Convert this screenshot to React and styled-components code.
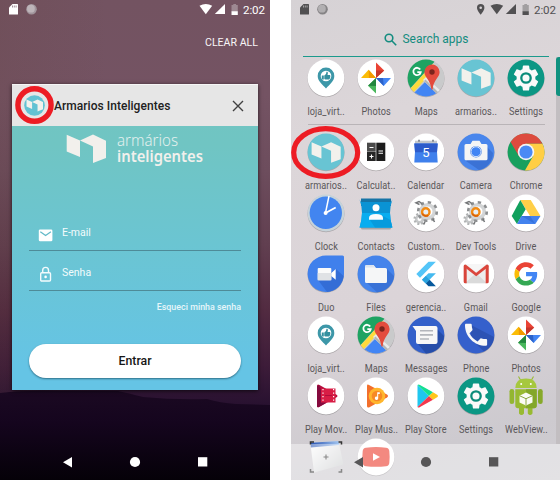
import React from "react";
import styled, { createGlobalStyle } from "styled-components";

const Global = createGlobalStyle`
  * { box-sizing: border-box; }
  body { margin: 0; background: #fff; font-family: Roboto, "Liberation Sans", sans-serif; }
`;

const Page = styled.div`
  display: flex;
  gap: 21px;
  width: 560px;
  height: 480px;
  overflow: hidden;
  background: #fff;
`;

const Phone = styled.section`
  position: relative;
  display: flex;
  flex-direction: column;
  flex: none;
  width: ${(p) => p.$width}px;
  height: 480px;
  overflow: hidden;
  background: ${(p) => p.$background};
`;

const Hills = styled.svg`
  position: absolute;
  left: 0;
  bottom: 0;
`;

/* ---------- status bar ---------- */

const StatusRow = styled.header`
  position: relative;
  display: flex;
  align-items: center;
  flex: none;
  height: 20px;
  padding-left: 9px;
  color: ${(p) => p.$color};
`;

const StatusIcons = styled.svg`
  flex: none;
  width: 232px;
  height: 20px;
`;

const Time = styled.span`
  margin-left: 2px;
  font-size: 11.6px;
  line-height: 18px;
  margin-bottom: 1px;
  letter-spacing: -0.1px;
`;

function StatusBar({ color, pin, dim }) {
  return (
    <StatusRow $color={color}>
      <StatusIcons viewBox="9 0 232 20" fill={color}>
        <path d="M12.500 4H17.500Q18 4 18 4.500V14Q18 14.500 17.500 14.500H9.500Q9 14.500 9 14V7.500Z" />
        <path d="M12.500 5.500v2M14.300 5.500v2M16.100 5.500v2" stroke={pin ? "#bbb" : "#8a7380"} strokeWidth=".8" />
        <circle cx="31.500" cy="9.200" r="5.300" fill={pin ? "#858385" : "#a1959c"} />
        <circle cx="30.900" cy="8.700" r="3.900" fill={pin ? "#b1afb1" : "#bdb4b9"} />
        {pin && (
          <path
            fillRule="evenodd"
            d="M189.700 4a3.700 3.700 0 0 0-3.700 3.700c0 2.900 3.700 7 3.700 7s3.700-4.100 3.700-7A3.700 3.700 0 0 0 189.700 4zm0 2.400a1.300 1.300 0 1 1 0 2.600 1.300 1.300 0 0 1 0-2.600z"
          />
        )}
        <path d="M199.500 5.800Q205.800 2 212.200 5.800L205.800 14.300Z" />
        <path d="M225 4V14H214.800Z" />
        <path d="M233.300 4h2.800v1h1.700v6.200h-6.300V5h1.800z" fill={dim} />
        <path d="M231.500 11.200h6.300V15h-6.300z" />
      </StatusIcons>
      <Time>2:02</Time>
    </StatusRow>
  );
}

/* ---------- navigation bar ---------- */

const NavBar = styled.nav`
  position: absolute;
  left: 0;
  right: 0;
  bottom: 0;
  height: 36px;
  padding-left: 63px;
  background: ${(p) => p.$background};
`;

function Navigation({ color, background }) {
  return (
    <NavBar $background={background}>
      <svg width="145" height="36" fill={color}>
        <path d="M9 13v10.400L0 18.200z" />
        <circle cx="72" cy="18" r="5.100" />
        <path d="M135 13.200h9.300v9.300H135z" />
      </svg>
    </NavBar>
  );
}

const Highlight = styled.svg`
  position: absolute;
  left: ${(p) => p.$left}px;
  top: ${(p) => p.$top}px;
  fill: none;
  stroke: #ed1c24;
`;

/* ---------- recents screen ---------- */

const ClearAll = styled.div`
  padding: 15px 12px 0 0;
  height: 64px;
  text-align: right;
  font-size: 10.6px;
  line-height: 15px;
  color: #f8f5f7;
`;

const Card = styled.article`
  position: relative;
  display: flex;
  flex-direction: column;
  width: 246px;
  height: 306px;
  margin-left: 12px;
  background: linear-gradient(#71c5c1, #70c5c3 20%, #6bc5d2 52%, #65c4e5 92%);
  box-shadow: 0 1px 4px rgba(0, 0, 0, 0.7);
`;

const CardHeader = styled.div`
  display: flex;
  align-items: center;
  flex: none;
  height: 42px;
  padding-left: 12px;
  background: #e6e6e6;
  border-top: 1px solid #f6f6f6;
`;

const CardTitle = styled.h1`
  margin: 0 0 0 9px;
  width: 178px;
  font-size: 12px;
  font-weight: 500;
  line-height: 20px;
  letter-spacing: 0.04px;
  color: #212121;
  white-space: nowrap;
`;

const Logo = styled.svg`
  flex: none;
  margin-left: 54px;
`;

const Field = styled.label`
  display: flex;
  align-items: center;
  height: ${(p) => p.$height}px;
  margin: ${(p) => p.$top}px 17px 0;
  padding: ${(p) => p.$drop}px 0 0 9px;
  border-bottom: 1px solid #4e8b98;
  font-size: 10.5px;
  color: #f3fbfc;
`;

const FieldText = styled.span`
  margin: 0 0 3px 9px;
  line-height: 14px;
`;

const Forgot = styled.div`
  margin: 9px 17px 0 0;
  text-align: right;
  font-size: 8.9px;
  line-height: 14px;
  font-weight: 500;
  color: #e6f6fa;
`;

const EnterButton = styled.button`
  width: 212px;
  height: 34px;
  margin: 30px 17px 0;
  padding: 0;
  border: 0;
  border-radius: 17px;
  background: #fff;
  box-shadow: 0 1px 2px rgba(0, 40, 60, 0.55);
  font: 500 12.3px Roboto, sans-serif;
  color: #161616;
`;

const BRAND = "M0 .500L13.300 6.200V22.800L0 17.200ZM13.300 6.200L26.300 .200L39.300 6.500V23.800L26.300 28.800V12.200Z";

function Recents() {
  return (
    <Phone
      $width={270}
      $background="linear-gradient(90deg, rgba(95,60,50,.14), rgba(75,20,40,0) 40%), linear-gradient(#735361 0, #745363 95px, #6d4d5d 170px, #613f50 245px, #522b41 310px, #3d1c39 365px, #281130 405px)"
    >
      <Hills width="270" height="100" viewBox="0 380 270 100">
        <defs>
          <linearGradient id="night" x1="0" y1="0" x2="0" y2="1">
            <stop offset="0" stopColor="#1b0922" />
            <stop offset=".35" stopColor="#15051e" />
            <stop offset="1" stopColor="#050108" />
          </linearGradient>
        </defs>
        <path d="M0 393Q25 390 60 391H118Q128 393 143 397Q175 400 207 399Q220 403 236 404L270 405V480H0Z" fill="url(#night)" />
      </Hills>
      <StatusBar color="#fff" dim="#9d8892" />
      <ClearAll>CLEAR ALL</ClearAll>
      <Card>
        <CardHeader>
          <svg width="21" height="21" viewBox="0 0 21 21">
            <circle cx="10.500" cy="10.500" r="10.300" fill="#63c2d3" />
            <path d={BRAND} fill="#f3f1ec" transform="translate(2.500 4.300) scale(.42)" />
          </svg>
          <CardTitle>Armarios Inteligentes</CardTitle>
          <svg width="12" height="12" stroke="#404040" strokeWidth="1.400">
            <path d="M1 1L11 11M11 1L1 11" />
          </svg>
        </CardHeader>
        <Logo width="140" height="40" fill="#f2f0ec" fontFamily="Noto Sans, Open Sans, sans-serif">
          <path d={BRAND} transform="translate(.700 8.300)" />
          <text x="51" y="19.500" fontSize="15.500" fontWeight="300" textLength="61" lengthAdjust="spacingAndGlyphs" fill="#e2f0ee">armários</text>
          <text x="51" y="35.500" fontSize="15.500" fontWeight="600" textLength="86" lengthAdjust="spacingAndGlyphs">inteligentes</text>
        </Logo>
        <Field $height={35} $top={50} $drop={3}>
          <svg width="15" height="14" viewBox="0 0 15 14">
            <rect x=".800" y="1.500" width="13.600" height="11.800" rx="1.300" fill="#fff" />
            <path d="M2.300 3.700L7.600 7.500L12.900 3.700" fill="none" stroke="#62b9c8" strokeWidth="1.200" />
          </svg>
          <FieldText>E-mail</FieldText>
        </Field>
        <Field $height={40} $top={0} $drop={7}>
          <svg width="15" height="17" viewBox="0 0 15 17" fill="none" stroke="#f3fbfd" strokeWidth="1.400">
            <rect x="2.700" y="6.700" width="9.800" height="8.300" rx="1" />
            <path d="M4.700 6.500V4.300a2.900 2.900 0 0 1 5.800 0V6.500" />
            <circle cx="7.600" cy="10.900" r="1.300" fill="#fff" stroke="none" />
          </svg>
          <FieldText>Senha</FieldText>
        </Field>
        <Forgot>Esqueci minha senha</Forgot>
        <EnterButton>Entrar</EnterButton>
      </Card>
      <Navigation color="#fff" background="transparent" />
      <Highlight $left={14} $top={85} width="41" height="40" strokeWidth="5.400">
        <ellipse cx="20.500" cy="20" rx="16.600" ry="16.300" />
      </Highlight>
    </Phone>
  );
}

/* ---------- app icons, drawn on a 38px square ---------- */

const Disc = ({ fill = "#fff" }) => (
  <>
    <circle cx="19" cy="19.700" r="18.500" fill="#000" opacity=".22" />
    <circle cx="19" cy="19" r="18.400" fill={fill} />
  </>
);

const LojaIcon = () => (
  <>
    <Disc />
    <path d="M19 8.600a8.300 8.300 0 0 0-8.300 8.300c0 5.500 5 8.300 8.300 12.700 3.300-4.400 8.300-7.200 8.300-12.700A8.300 8.300 0 0 0 19 8.600z" fill="#3d97a8" />
    <circle cx="19" cy="17" r="5.300" fill="#fff" />
    <path d="M14.800 16.500h2v4h-2zM17.300 16.500l1.700-1.500.5-2.200c1.500-.3 1.700 1 1 3.200h2.300c1 .2.600 4.300-1 4.500h-3.500l-1-.5z" fill="#34909f" />
  </>
);

const PhotosIcon = () => (
  <>
    <Disc />
    <path d="M19 3.500V19L27.200 11.400Z" fill="#ea4335" />
    <path d="M19 11.500V19L27.200 11.400Z" fill="#c5352b" />
    <path d="M4 19H19L11.600 10.800Z" fill="#fbbc05" />
    <path d="M11.600 10.800L19 19H12Z" fill="#f29900" />
    <path d="M34 19H19L26.700 27Z" fill="#4285f4" />
    <path d="M26.700 27L19 19H26Z" fill="#2c62c9" />
    <path d="M19 34.500V19L11 26.800Z" fill="#48b75c" />
    <path d="M19 27V19L11 26.800Z" fill="#22863e" />
  </>
);

const MapsIcon = () => (
  <>
    <Disc fill="#c9cacb" />
    <clipPath id="mapDisc"><circle cx="19" cy="19" r="18.400" /></clipPath>
    <g clipPath="url(#mapDisc)">
      <path d="M0 0H30L0 33Z" fill="#1ea362" />
      <path d="M5 36L18 23L33 38H5Z" fill="#4285f4" />
      <path d="M3 30L26 5L29 8L6 34Z" fill="#ffdb3c" />
      <path d="M16 21L19 18L38 36L34 38Z" fill="#e9eaea" />
      <path d="M17 22L18.500 20.500L36 38H33Z" fill="#b4b5b7" />
    </g>
    <path d="M13.200 10.500A3.700 3.700 0 1 0 13.700 13.200H10.300" fill="none" stroke="#fff" strokeWidth="1.800" />
    <path d="M25 5.500a7.600 7.600 0 0 0-7.600 7.600c0 5.500 6 7.500 7 17.400h1.200c1-9.900 7-11.900 7-17.400A7.600 7.600 0 0 0 25 5.500z" fill="#e34b3d" />
    <circle cx="25" cy="13" r="2.700" fill="#7b241c" />
  </>
);

const ArmariosIcon = () => (
  <>
    <Disc fill="#68c4d3" />
    <path d={BRAND} fill="#f2f1ec" transform="translate(4.600 9) scale(.74 .72)" />
  </>
);

const GEAR =
  "M19.140 12.940c.04-.3.06-.61.06-.94 0-.32-.02-.64-.07-.94l2.030-1.580c.18-.14.23-.41.12-.61l-1.920-3.320c-.12-.22-.37-.29-.59-.22l-2.390.96c-.5-.38-1.030-.7-1.620-.94l-.36-2.540c-.04-.24-.24-.41-.48-.41h-3.840c-.24 0-.43.17-.47.41l-.36 2.540c-.59.24-1.130.57-1.620.94l-2.390-.96c-.22-.08-.47 0-.59.22L2.740 8.870c-.12.21-.08.47.12.61l2.030 1.580c-.05.3-.09.63-.09.94s.02.64.07.94l-2.030 1.580c-.18.14-.23.41-.12.61l1.920 3.320c.12.22.37.29.59.22l2.390-.96c.5.38 1.030.7 1.620.94l.36 2.540c.05.24.24.41.48.41h3.840c.24 0 .44-.17.47-.41l.36-2.540c.59-.24 1.130-.56 1.620-.94l2.390.96c.22.08.47 0 .59-.22l1.920-3.320c.12-.22.07-.47-.12-.61z";

const SettingsIcon = () => (
  <>
    <Disc fill="#0b9784" />
    <path d={GEAR} fill="#fafafa" transform="translate(3.400 3.400) scale(1.300)" />
    <circle cx="19" cy="19" r="4.700" fill="#fafafa" stroke="#0b8c7b" strokeWidth="2.300" />
  </>
);

const CalculatorIcon = () => (
  <>
    <Disc />
    <rect x="10" y="9.700" width="8.700" height="9" fill="#4a4a4a" />
    <rect x="10" y="19" width="8.700" height="9" fill="#262626" />
    <rect x="19.300" y="9.700" width="9" height="18.300" fill="#1c1c1c" />
    <path d="M12.500 14.500h4M12.500 23.500h4M14.500 21.500v4M21.500 18h4.500M21.500 20.300h4.500" stroke="#fff" strokeWidth="1.100" />
  </>
);

const CalendarIcon = () => (
  <>
    <Disc />
    <path d="M8 7.700h22v4H8z" fill="#c3c7cc" />
    <path d="M11 6.800h2v2h-2zM25 6.800h2v2h-2z" fill="#8a9098" />
    <path d="M7.300 10.500h23.400l-.7 8 .7 11H7.300l.7-11z" fill="#3f80ec" />
    <path d="M7.300 10.500h23.400l-.7 8.700H8z" fill="#2d5ccb" />
    <text x="19" y="24" textAnchor="middle" fontSize="13" fill="#fff" fontFamily="Roboto, sans-serif">5</text>
  </>
);

const CameraIcon = () => (
  <>
    <Disc fill="#4986ec" />
    <path d="M30 14L36 20A18 18 0 0 1 22 37L9 28Z" fill="#3b72d5" />
    <path d="M9 11h4.500L15.500 7.800h7l2 3.200H29q1.500 0 1.500 1.500v13.300q0 1.500-1.500 1.500H9q-1.500 0-1.500-1.500V12.500q0-1.500 1.500-1.500z" fill="#f5f5f5" />
    <circle cx="19" cy="18.700" r="5.800" fill="#3c78e0" />
    <circle cx="19" cy="18.700" r="5" fill="#4285f4" stroke="#dbe7fb" strokeWidth="1" />
  </>
);

const ChromeIcon = () => (
  <>
    <Disc fill="#18a05e" />
    <path d="M3.600 8.900A18.400 18.400 0 0 1 35.500 10.700H19L11.800 23.100Z" fill="#dd4b3e" />
    <path d="M35.500 10.700A18.400 18.400 0 0 1 17.900 37.400L26.200 23.100L19 10.700Z" fill="#ffce44" />
    <circle cx="19" cy="19" r="8.300" fill="#f4f4f4" />
    <circle cx="19" cy="19" r="6.600" fill="#4a8af4" />
  </>
);

const ClockIcon = () => (
  <>
    <Disc fill="#c6d3da" />
    <circle cx="18.800" cy="18.800" r="16.200" fill="#4285f0" />
    <path d="M18.500 18.800L22 2" stroke="#fff" strokeWidth="1.500" />
    <path d="M18.500 19L28.700 13.500" stroke="#fff" strokeWidth="1.900" />
    <circle cx="18.600" cy="19" r="2" fill="#fff" />
  </>
);

const ContactsIcon = () => (
  <>
    <path d="M4 31h30v3q0 1.500-1.500 1.500h-27Q4 35.500 4 34z" fill="#a8a4a6" />
    <path d="M4 4.500h30V12H4z" fill="#1674a6" />
    <path d="M2.600 5.500Q5 12 5 19T2.600 33.500H35.400Q33 26 33 19T35.400 5.500L34 8H4Z" fill="#0a93d4" />
    <path d="M5 19H33Q33 26 35.400 33.500H2.600Q5 26 5 19Z" fill="#08adf0" />
    <path d="M26 22L33.500 26L35 33.500H18L13 26Z" fill="#079bdd" />
    <circle cx="19" cy="13.800" r="3.500" fill="#fff" />
    <path d="M12 25.700v-2q0-3.800 7-3.800t7 3.800v2z" fill="#f7fbfd" />
  </>
);

const ToolsIcon = () => (
  <>
    <Disc />
    <g fill="none">
      <circle cx="12.500" cy="25" r="3.300" stroke="#c6c8c9" strokeWidth="2.500" />
      <circle cx="12.500" cy="25" r="5" stroke="#b0b2b3" strokeWidth="2.200" strokeDasharray="2 1.930" />
      <circle cx="20.500" cy="17.500" r="6.800" stroke="#d3d5d6" strokeWidth="3.600" />
      <circle cx="20.500" cy="17.500" r="9.300" stroke="#8d8f91" strokeWidth="2.600" strokeDasharray="3.300 4" />
      <path d="M12.500 10.500L9 8.800l3-1.300 3 2M26 25l1.500 3M18 28l-1.500 2.500" stroke="#747678" strokeWidth="1.500" />
      <circle cx="18.800" cy="18" r="3.700" fill="#e6eef7" stroke="#f28a13" strokeWidth="2.400" />
      <path d="M15.300 19.500a4 4 0 0 0 6 1.800" stroke="#d75f0a" strokeWidth="1.600" />
    </g>
  </>
);

const DriveIcon = () => (
  <>
    <Disc />
    <path d="M13.300 6H23.700L33.500 22H23Z" fill="#ffcf48" />
    <path d="M13.300 6L18.700 15.300L10 30L4.700 22Z" fill="#11a05d" />
    <path d="M14.400 22H33.500L28.300 30H10Z" fill="#4382ee" />
    <path d="M14.400 22H23L28.300 30Z" fill="#3672dc" />
  </>
);

const DuoIcon = () => (
  <>
    <path d="M19 1.300H36Q37 1.300 37 2.300V19.500A18.200 18.200 0 0 1 .500 19.500A18.300 18.300 0 0 1 19 1.300Z" fill="#aaa6aa" />
    <path d="M19 .600H35.500Q37 .600 37 2.100V18.800A18.200 18.200 0 0 1 .600 18.800A18.200 18.200 0 0 1 19 .600Z" fill="#4080ec" />
    <path d="M29 14L36.500 21A18 18 0 0 1 20 37L11 25Z" fill="#346dd6" />
    <rect x="10.700" y="13" width="13.600" height="12.300" rx="1" fill="#fafafa" />
    <path d="M10.700 18H24.300V25.300H10.700Z" fill="#e0e2e5" />
    <path d="M24.300 18L28.700 14V24.800L24.300 21Z" fill="#fff" />
  </>
);

const FilesIcon = () => (
  <>
    <Disc fill="#4584eb" />
    <path d="M29 13L37 21A18.400 18.400 0 0 1 20 37.300L10 28Z" fill="#3972d7" />
    <path d="M9.500 10h7l2.500 3h9.500q1.500 0 1.500 1.500v12q0 1.500-1.500 1.500h-19Q8 28 8 26.500v-15Q8 10 9.500 10z" fill="#f5f6f7" />
    <path d="M9.500 10h7l2 2.400H8v-.9Q8 10 9.500 10z" fill="#dce4ef" />
  </>
);

const FlutterIcon = () => (
  <>
    <Disc />
    <path d="M21.500 6.800L9.300 19L13 22.700L28.900 6.800Z" fill="#54c5f8" />
    <path d="M21.500 18.200L15 24.700L18.800 28.500L28.900 18.200Z" fill="#44b9ef" />
    <path d="M15 24.700L18.800 20.900L22.600 24.700L18.800 28.500Z" fill="#29a3df" />
    <path d="M18.800 28.500L22.600 24.700L28.900 31.300H21.500Z" fill="#06599d" />
  </>
);

const GmailIcon = () => (
  <>
    <Disc />
    <rect x="6.700" y="9.500" width="25" height="18.800" rx="1.500" fill="#ededed" />
    <path d="M8 28.300L19 18L30 28.300Z" fill="#dadada" />
    <path d="M9 9.500H29L19 17Z" fill="#f6f6f6" />
    <path d="M6.700 11Q6.700 9.500 8.200 9.500L9.700 12.500V28.300H8.200Q6.700 28.300 6.700 26.800ZM31.700 11Q31.700 9.500 30.200 9.500L28.700 12.500V28.300H30.200Q31.700 28.300 31.700 26.800Z" fill="#d9453b" />
    <path d="M7.800 10.600L19.200 19.500L30.600 10.600" fill="none" stroke="#db463c" strokeWidth="2.700" />
  </>
);

const GoogleIcon = () => (
  <>
    <Disc />
    <g transform="translate(7.400 7.300) scale(.485)">
      <path fill="#EA4335" d="M24 9.500c3.540 0 6.710 1.220 9.210 3.600l6.850-6.850C35.900 2.380 30.470 0 24 0 14.620 0 6.510 5.380 2.560 13.220l7.980 6.190C12.430 13.720 17.740 9.500 24 9.500z" />
      <path fill="#4285F4" d="M46.980 24.550c0-1.570-.15-3.090-.38-4.550H24v9.020h12.940c-.58 2.960-2.260 5.480-4.780 7.180l7.730 6c4.510-4.180 7.090-10.360 7.090-17.650z" />
      <path fill="#FBBC05" d="M10.530 28.590c-.48-1.450-.76-2.990-.76-4.590s.27-3.140.76-4.590l-7.980-6.190C.92 16.460 0 20.120 0 24c0 3.880.92 7.540 2.560 10.780l7.970-6.190z" />
      <path fill="#34A853" d="M24 48c6.480 0 11.930-2.130 15.890-5.810l-7.730-6c-2.150 1.450-4.920 2.300-8.160 2.300-6.260 0-11.570-4.220-13.470-9.910l-7.980 6.190C6.510 42.620 14.620 48 24 48z" />
    </g>
  </>
);

const MessagesIcon = () => (
  <>
    <Disc fill="#3360ca" />
    <path d="M30 13L37 20A18.400 18.400 0 0 1 19 37.400L11 28Z" fill="#264da9" />
    <path d="M5.500 10H28.500Q30.500 10 30.500 12V26Q30.500 28 28.500 28H11Q9 28 9 26V15Z" fill="#f7f7f7" />
    <path d="M13 14.800h13M13 18.900h13M13 23h9" stroke="#b3b6bc" strokeWidth="1.600" />
  </>
);

const CallIcon = () => (
  <>
    <Disc fill="#3560cc" />
    <path d="M14 9L37 21A18.400 18.400 0 0 1 27 35.500L14 23Z" fill="#2c52b4" />
    <path
      fill="#f8f8f8"
      transform="translate(4.300 4) scale(1.230)"
      d="M6.620 10.790c1.440 2.830 3.760 5.140 6.590 6.590l2.200-2.200c.27-.27.67-.36 1.020-.24 1.120.37 2.330.57 3.570.57.55 0 1 .45 1 1V20c0 .55-.45 1-1 1-9.390 0-17-7.610-17-17 0-.55.45-1 1-1h3.500c.55 0 1 .45 1 1 0 1.250.2 2.450.57 3.570.11.35.03.74-.25 1.020l-2.200 2.200z"
    />
  </>
);

const MoviesIcon = () => (
  <>
    <Disc />
    <path d="M11 7.500Q10 7.500 10 9V29Q10 31 12 30L30 20Q31 19 30 18L12.500 8Z" fill="#b60e3d" />
    <path d="M10 9V29Q10 31 12 30L19 26L12 8Z" fill="#850a3e" />
    <path d="M14 11.500H28.500V25.500H14Z" fill="#d81d45" />
    <path d="M16 12v13.500M26.600 12v13.500" stroke="#fff" strokeWidth="1.200" strokeDasharray="1.200 2.300" />
    <path d="M18 18.500h7" stroke="#b30c3b" />
  </>
);

const MusicIcon = () => (
  <>
    <Disc />
    <path d="M11.500 7.700Q10 7 10 9V29Q10 31 12 30.500L30 20.500Q32 19 30 17.500Z" fill="#f26f2b" />
    <circle cx="20" cy="19" r="8.300" fill="#ffb62c" />
    <circle cx="20" cy="19" r="5.300" fill="#f78924" />
    <path d="M20.200 15.300h2.600v1.600h-1.600v4.300a1.700 1.700 0 1 1-1-1.500z" fill="#fff" />
  </>
);

const StoreIcon = () => (
  <>
    <Disc />
    <path d="M10.500 8V30L22 19Z" fill="#20c7ef" />
    <path d="M10.500 8Q11.500 7 13 8L26 15.300L22 19Z" fill="#13df92" />
    <path d="M10.500 30Q11.500 31 13 30L26 22.700L22 19Z" fill="#f4384d" />
    <path d="M26 15.300L30.500 18Q31.500 19 30.500 20L26 22.700L22 19Z" fill="#ffc61b" />
  </>
);

const AndroidIcon = () => (
  <>
    <path d="M13.500 3L11.500-.500M24.500 3L26.500-.500" stroke="#9aba34" strokeWidth="1.100" />
    <path d="M8.300 11Q8.600 1.600 19 1.600T29.700 11Z" fill="#a6c83e" />
    <circle cx="14.200" cy="7" r="1" fill="#fff" />
    <circle cx="23.800" cy="7" r="1" fill="#fff" />
    <rect x="2.500" y="12" width="4.700" height="15" rx="2.300" fill="#93b630" />
    <rect x="31" y="12" width="4.700" height="15" rx="2.300" fill="#87a92a" />
    <path d="M8.300 12.300H29.700V28.500Q29.700 31.300 27 31.300H25.500V36.500Q23 39.500 20.800 36.500V31.300H17V36.500Q14.500 39.500 12 36.500V31.300H11Q8.300 31.300 8.300 28.500Z" fill="#98ba31" />
    <path d="M19 12.300H29.700V28.500Q29.700 31.300 27 31.300H19Z" fill="#83a729" />
    <path d="M19 15.500L25.500 18.700V25.500L19 28.500L12.500 25.500V18.700Z" fill="#fafbf4" />
    <path d="M12.700 18.800L19 21.700L25.400 18.800M19 21.700V28" fill="none" stroke="#7f9d2e" strokeWidth=".9" />
  </>
);

const WallpaperIcon = () => (
  <>
    <defs>
      <linearGradient id="sheet" x1="0" y1="0" x2="1" y2="1">
        <stop offset="0" stopColor="#fff" />
        <stop offset="1" stopColor="#c7c9cb" />
      </linearGradient>
      <linearGradient id="titleStrip">
        <stop offset="0" stopColor="#2450b0" />
        <stop offset="1" stopColor="#a3c6f0" />
      </linearGradient>
    </defs>
    <path d="M3.300 4.800L31.500 3L36.500 26.500L7 34.500Z" fill="url(#sheet)" />
    <path d="M3.300 4.800L31.500 3L32.300 7L3.900 9.500Z" fill="url(#titleStrip)" />
    <path d="M3.500 7V4H7M31.500 4H34.500V7M34.500 31V34H31.500M3.500 31V34H7" fill="none" stroke="#333" strokeWidth="1.500" />
    <path d="M19 16.500v5M16.500 19h5" stroke="#333" strokeWidth="1.100" />
  </>
);

const YoutubeIcon = () => (
  <>
    <Disc />
    <path d="M9 9.700Q19 8.500 29 9.700Q32 10 32.300 13Q33 19 32.300 25Q32 28 29 28.300Q19 29.300 9 28.300Q6 28 5.700 25Q5 19 5.700 13Q6 10 9 9.700Z" fill="#ea3425" />
    <path d="M16 15.200L23 19L16 22.800Z" fill="#fff" />
  </>
);

/* ---------- app drawer ---------- */

const SearchBar = styled.div`
  display: flex;
  justify-content: center;
  align-items: center;
  flex: none;
  gap: 5px;
  width: 246px;
  height: 37px;
  margin-left: 12px;
  padding: 2px 0 0 1px;
  border-bottom: 1px solid #1b9a8c;
  font-size: 12px;
  letter-spacing: 0;
  color: #148c7f;
`;

const AppGrid = styled.div`
  display: grid;
  flex: none;
  grid-template-columns: repeat(5, 50px);
  grid-auto-rows: 61px;
  width: 250px;
  margin: ${(p) => p.$top}px 0 0 10px;
`;

const AppCell = styled.div`
  display: flex;
  flex-direction: column;
  align-items: center;
`;

const AppArt = styled.svg`
  flex: none;
  overflow: visible;
`;

const AppLabel = styled.span`
  margin-top: 7px;
  font-size: 11.3px;
  line-height: 16px;
  letter-spacing: 0.1px;
  white-space: nowrap;
  color: #5a5759;
  transform: scaleX(0.81);
`;

const Divider = styled.div`
  flex: none;
  width: 237px;
  height: 1px;
  margin: 4px 0 0 17px;
  background: #b9b4b7;
`;

const ScrollTrack = styled.div`
  position: absolute;
  right: 0;
  top: 57px;
  bottom: 36px;
  width: 4px;
  background: #c2bec1;
`;

const ScrollThumb = styled.div`
  height: 39px;
  border-radius: 3px 0 0 3px;
  background: #10917f;
`;

const favourites = [
  ["loja_virt..", LojaIcon],
  ["Photos", PhotosIcon],
  ["Maps", MapsIcon],
  ["armarios..", ArmariosIcon],
  ["Settings", SettingsIcon],
];

const apps = [
  ["armarios..", ArmariosIcon],
  ["Calculat..", CalculatorIcon],
  ["Calendar", CalendarIcon],
  ["Camera", CameraIcon],
  ["Chrome", ChromeIcon],
  ["Clock", ClockIcon],
  ["Contacts", ContactsIcon],
  ["Custom..", ToolsIcon],
  ["Dev Tools", ToolsIcon],
  ["Drive", DriveIcon],
  ["Duo", DuoIcon],
  ["Files", FilesIcon],
  ["gerencia..", FlutterIcon],
  ["Gmail", GmailIcon],
  ["Google", GoogleIcon],
  ["loja_virt..", LojaIcon],
  ["Maps", MapsIcon],
  ["Messages", MessagesIcon],
  ["Phone", CallIcon],
  ["Photos", PhotosIcon],
  ["Play Mov..", MoviesIcon],
  ["Play Mus..", MusicIcon],
  ["Play Store", StoreIcon],
  ["Settings", SettingsIcon],
  ["WebView..", AndroidIcon],
  ["", WallpaperIcon],
  ["", YoutubeIcon],
];

const AppTile = ({ name, Icon }) => (
  <AppCell>
    <AppArt width="38" height="38" viewBox="0 0 38 38">
      <Icon />
    </AppArt>
    {name && <AppLabel>{name}</AppLabel>}
  </AppCell>
);

function Drawer() {
  return (
    <Phone $width={269} $background="linear-gradient(165deg, #d6d2d5, #dcd6d9 25%, #dbd4d8 60%, #cdcacf 88%, #cfcdd1)">
      <StatusBar color="#515052" dim="#a29fa1" pin />
      <SearchBar>
        <svg width="13" height="13" fill="none" stroke="#148c7f" strokeWidth="1.600">
          <circle cx="5" cy="5" r="3.800" />
          <path d="M7.800 7.800L12.200 12.200" />
        </svg>
        Search apps
      </SearchBar>
      <AppGrid $top={2}>
        {favourites.map(([name, Icon]) => (
          <AppTile key={name} name={name} Icon={Icon} />
        ))}
      </AppGrid>
      <Divider />
      <AppGrid $top={8}>
        {apps.map(([name, Icon], i) => (
          <AppTile key={i} name={name} Icon={Icon} />
        ))}
      </AppGrid>
      <ScrollTrack>
        <ScrollThumb />
      </ScrollTrack>
      <Navigation color="#575657" background="rgba(255, 255, 255, 0.42)" />
      <Highlight $left={0} $top={125} width="70" height="55" strokeWidth="5.200">
        <ellipse cx="34.700" cy="27.500" rx="32" ry="23.900" />
      </Highlight>
    </Phone>
  );
}

export default function App() {
  return (
    <>
      <Global />
      <Page>
        <Recents />
        <Drawer />
      </Page>
    </>
  );
}
